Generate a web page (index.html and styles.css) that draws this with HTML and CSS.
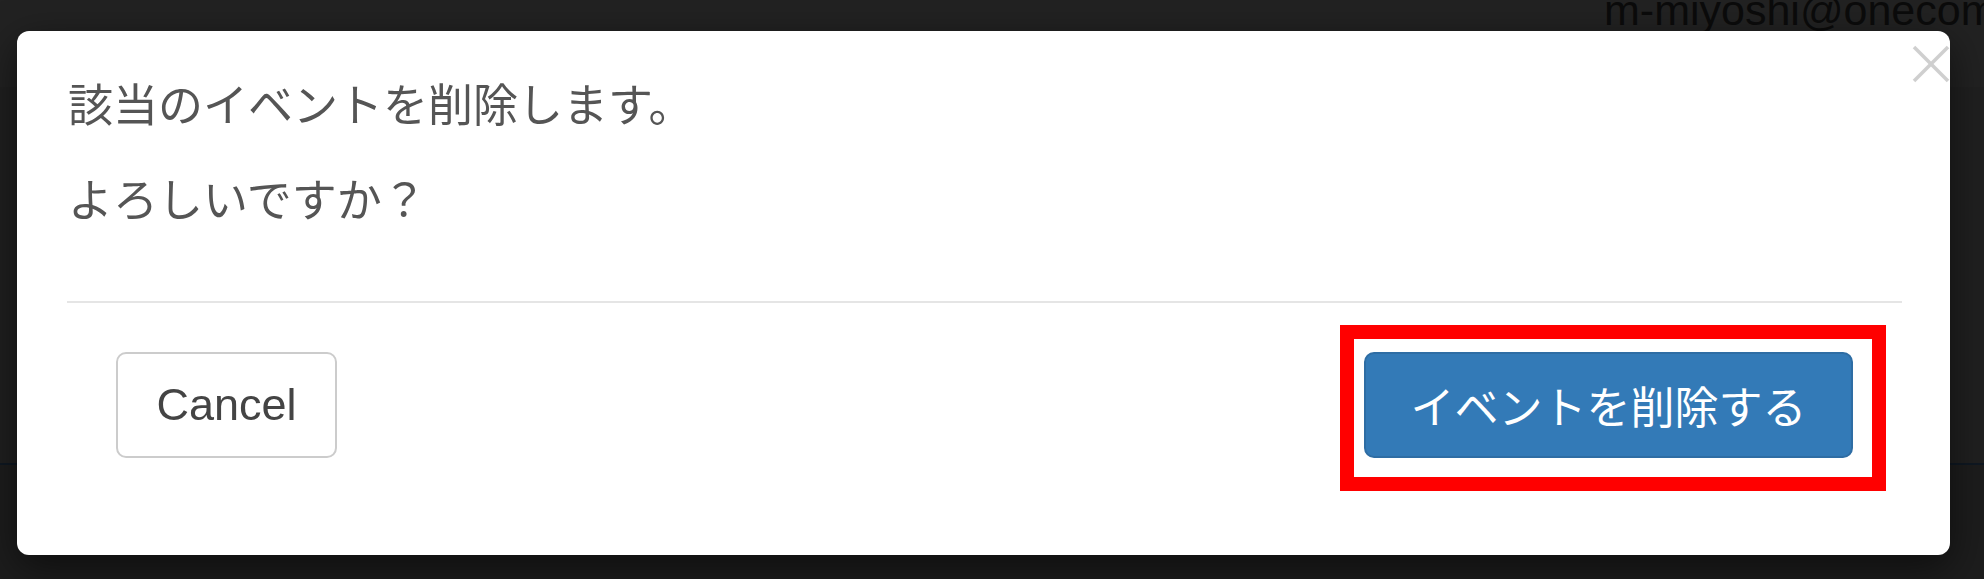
FILE: index.html
```html
<!DOCTYPE html>
<html lang="ja">
<head>
  <meta charset="UTF-8" />
  <title>イベント削除</title>
  <link rel="stylesheet" href="styles.css">
</head>
<body>

  <!-- 背景のページ -->
  <div class="page">
    <div class="topbar">
      <span class="user">m-miyoshi@onecom</span>
    </div>
    <div class="page-main"></div>
    <div class="page-bottom"></div>
  </div>

  <!-- 削除確認モーダル -->
  <div class="modal">
    <button class="close" aria-label="閉じる">
      <svg width="38" height="38" viewBox="0 0 38 38">
        <line x1="2" y1="2" x2="36" y2="36" />
        <line x1="36" y1="2" x2="2" y2="36" />
      </svg>
    </button>

    <div class="modal-body">
      <p>該当のイベントを削除します。</p>
      <p>よろしいですか？</p>
    </div>

    <div class="modal-rule"><div class="line"></div></div>

    <div class="modal-footer">
      <button class="btn btn-default">Cancel</button>
      <div class="highlight">
        <button class="btn btn-primary">イベントを削除する</button>
      </div>
    </div>
  </div>

</body>
</html>
```

FILE: styles.css
```css
* { box-sizing: border-box; }

body {
  margin: 0;
  padding: 0;
  height: 579px;
  overflow: hidden;
  background: #1c1c1c;
  font-family: 'Noto Sans CJK JP', 'Noto Sans', sans-serif;
}

.page {
  display: flex;
  flex-direction: column;
  height: 100%;
}

.topbar {
  height: 87px;
  background: #222;
  padding-left: 1604px;
  white-space: nowrap;
  overflow: hidden;
}

.user {
  display: block;
  font-family: 'Liberation Sans', Arial, sans-serif;
  font-size: 43px;
  line-height: 20px;
  color: #0b0b0b;
}

.page-main {
  height: 378px;
  background: #202020;
  border-bottom: 2px solid #0f1822;
}

.page-bottom {
  flex: 1;
  background: #1d1d1d;
}

/* modal */
.modal {
  position: fixed;
  top: 31px;
  left: 17px;
  width: 1933px;
  background: #fff;
  border-radius: 12px;
  overflow: hidden;
  box-shadow: 0 12px 40px rgba(0, 0, 0, 0.55);
}

.close {
  position: absolute;
  top: 14px;
  right: 0;
  width: 38px;
  height: 38px;
  padding: 0;
  border: 0;
  background: none;
}

.close svg {
  display: block;
}

.close line {
  stroke: #cfcfcf;
  stroke-width: 3.5;
}

.modal-body {
  padding: 40px 51px 40px;
}

.modal-body p {
  margin: 0 0 31px;
  font-size: 45px;
  line-height: 64px;
  color: #555;
}

.modal-rule {
  padding: 0 48px 0 50px;
}

.modal-rule .line {
  height: 2px;
  background: #e5e5e5;
}

.modal-footer {
  display: flex;
  justify-content: space-between;
  align-items: flex-start;
  padding: 49px 97px 97px 99px;
}

.btn {
  height: 106px;
  border-radius: 10px;
  font-family: 'Liberation Sans', 'Noto Sans CJK JP', sans-serif;
  font-size: 45px;
  cursor: pointer;
}

.btn-default {
  width: 221px;
  background: #fff;
  border: 2px solid #ccc;
  color: #444;
}

.btn-primary {
  display: block;
  width: 489px;
  background: #337ab7;
  border: 2px solid #2e6da4;
  color: #fff;
  font-family: 'Noto Sans CJK JP', sans-serif;
  font-size: 44px;
}

/* 赤枠の注記 */
.highlight {
  position: relative;
}

.highlight::after {
  content: '';
  position: absolute;
  top: -27px;
  left: -24px;
  right: -33px;
  bottom: -33px;
  border: 14px solid #ff0000;
  pointer-events: none;
}
```
